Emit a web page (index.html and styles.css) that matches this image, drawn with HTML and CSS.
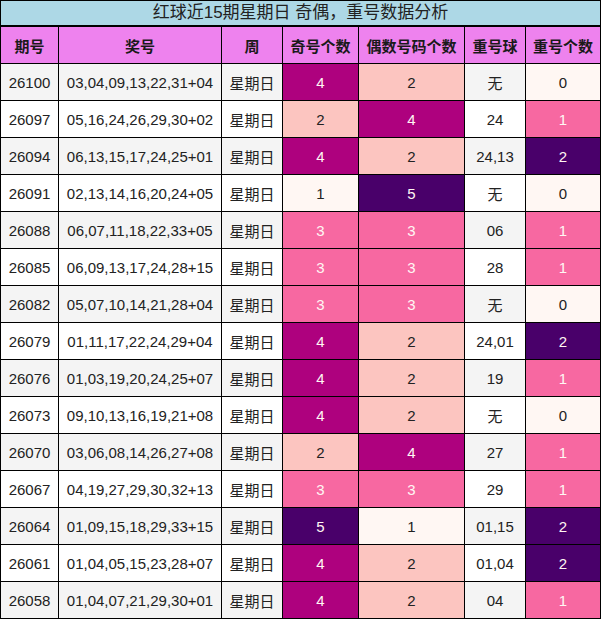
FILE: index.html
```html
<!DOCTYPE html>
<html>
<head>
<meta charset="utf-8">
<link rel="stylesheet" href="styles.css">
</head>
<body>
<div class="sheet">
  <div class="title">红球近15期星期日 奇偶，重号数据分析</div>
  <div class="grid">
    <div class="h">期号</div><div class="h">奖号</div><div class="h">周</div><div class="h">奇号个数</div><div class="h">偶数号码个数</div><div class="h">重号球</div><div class="h">重号个数</div>

    <div class="g">26100</div><div class="g">03,04,09,13,22,31+04</div><div class="g">星期日</div><div class="v4">4</div><div class="v2">2</div><div class="g">无</div><div class="v1">0</div>
    <div class="w">26097</div><div class="w">05,16,24,26,29,30+02</div><div class="w">星期日</div><div class="v2">2</div><div class="v4">4</div><div class="w">24</div><div class="v3">1</div>
    <div class="g">26094</div><div class="g">06,13,15,17,24,25+01</div><div class="g">星期日</div><div class="v4">4</div><div class="v2">2</div><div class="g">24,13</div><div class="v5">2</div>
    <div class="w">26091</div><div class="w">02,13,14,16,20,24+05</div><div class="w">星期日</div><div class="v1">1</div><div class="v5">5</div><div class="w">无</div><div class="v1">0</div>
    <div class="g">26088</div><div class="g">06,07,11,18,22,33+05</div><div class="g">星期日</div><div class="v3">3</div><div class="v3">3</div><div class="g">06</div><div class="v3">1</div>
    <div class="w">26085</div><div class="w">06,09,13,17,24,28+15</div><div class="w">星期日</div><div class="v3">3</div><div class="v3">3</div><div class="w">28</div><div class="v3">1</div>
    <div class="g">26082</div><div class="g">05,07,10,14,21,28+04</div><div class="g">星期日</div><div class="v3">3</div><div class="v3">3</div><div class="g">无</div><div class="v1">0</div>
    <div class="w">26079</div><div class="w">01,11,17,22,24,29+04</div><div class="w">星期日</div><div class="v4">4</div><div class="v2">2</div><div class="w">24,01</div><div class="v5">2</div>
    <div class="g">26076</div><div class="g">01,03,19,20,24,25+07</div><div class="g">星期日</div><div class="v4">4</div><div class="v2">2</div><div class="g">19</div><div class="v3">1</div>
    <div class="w">26073</div><div class="w">09,10,13,16,19,21+08</div><div class="w">星期日</div><div class="v4">4</div><div class="v2">2</div><div class="w">无</div><div class="v1">0</div>
    <div class="g">26070</div><div class="g">03,06,08,14,26,27+08</div><div class="g">星期日</div><div class="v2">2</div><div class="v4">4</div><div class="g">27</div><div class="v3">1</div>
    <div class="w">26067</div><div class="w">04,19,27,29,30,32+13</div><div class="w">星期日</div><div class="v3">3</div><div class="v3">3</div><div class="w">29</div><div class="v3">1</div>
    <div class="g">26064</div><div class="g">01,09,15,18,29,33+15</div><div class="g">星期日</div><div class="v5">5</div><div class="v1">1</div><div class="g">01,15</div><div class="v5">2</div>
    <div class="w">26061</div><div class="w">01,04,05,15,23,28+07</div><div class="w">星期日</div><div class="v4">4</div><div class="v2">2</div><div class="w">01,04</div><div class="v5">2</div>
    <div class="g">26058</div><div class="g">01,04,07,21,29,30+01</div><div class="g">星期日</div><div class="v4">4</div><div class="v2">2</div><div class="g">04</div><div class="v3">1</div>
  </div>
</div>
</body>
</html>
```

FILE: styles.css
```css
html, body {
  margin: 0;
  padding: 0;
  background: #ffffff;
}
body {
  font-family: "Liberation Sans", "Noto Sans CJK SC", sans-serif;
  font-size: 15px;
  color: #222222;
}
.sheet {
  width: 601px;
  background: #000000;
  padding: 1px;
  box-sizing: border-box;
}
.title {
  height: 24px;
  line-height: 24px;
  background: #add8e6;
  text-align: center;
  font-size: 17px;
  color: #222222;
  margin-bottom: 2px;
}
.grid {
  display: grid;
  grid-template-columns: 57px 162px 60px 75px 105px 60px 74px;
  grid-template-rows: 36px repeat(15, 36px);
  gap: 1px;
}
.grid > div {
  display: flex;
  align-items: center;
  justify-content: center;
  white-space: nowrap;
}
.h {
  background: #ee82ee;
  font-weight: bold;
  color: #1a1a1a;
}
.g { background: #f4f4f4; }
.w { background: #ffffff; }
.v1 { background: #fff7f3; }
.v2 { background: #fcc5c0; }
.v3 { background: #f768a1; color: #fff7f3; }
.v4 { background: #ae017e; color: #fff7f3; }
.v5 { background: #49006a; color: #fff7f3; }
```
